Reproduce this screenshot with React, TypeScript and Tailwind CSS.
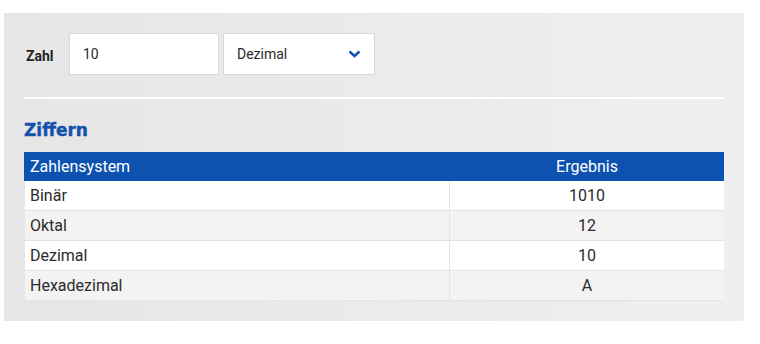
const rows = [
  { name: 'Binär', value: '1010' },
  { name: 'Oktal', value: '12' },
  { name: 'Dezimal', value: '10' },
  { name: 'Hexadezimal', value: 'A' },
];

export default function App() {
  return (
    <div className="min-h-screen bg-white pt-[13px] pl-[4px] font-['Roboto',sans-serif] text-[#2b2b2b]">
      <div className="w-[740px] h-[308px] bg-gradient-to-r from-[#e6e6e6] to-[#efefef] px-[20px] pt-[20px]">
        {/* Eingabe */}
        <div className="flex items-center h-[42px]">
          <label className="w-[45px] pl-[2px] pt-[4px] text-[14px] font-bold text-[#222]">Zahl</label>
          <input
            defaultValue="10"
            className="w-[150px] h-[42px] bg-white border border-[#d9d9d9] px-[13px] text-[14px] text-[#2b2b2b] outline-none"
          />
          <div className="ml-[4px] w-[152px] h-[42px] bg-white border border-[#d9d9d9] flex items-center justify-between pl-[13px] pr-[13px] text-[14px]">
            <span>Dezimal</span>
            <svg width="13" height="8" viewBox="0 0 13 8" fill="none">
              <path d="M1.5 1.5 L6.5 6 L11.5 1.5" stroke="#1452b0" strokeWidth="2.5" />
            </svg>
          </div>
        </div>

        <div className="mt-[22px] h-[2px] bg-white" />

        <h2 className="mt-[21px] text-[17px] leading-[20px] font-extrabold text-[#1450ae] font-['DejaVu_Sans',sans-serif] [-webkit-text-stroke:0.4px_#1450ae]">
          Ziffern
        </h2>

        {/* Tabelle */}
        <div className="mt-[12px] text-[16px]">
          <div className="flex h-[29px] items-center bg-[#0d52b0] text-white">
            <div className="w-[426px] pl-[6px]">Zahlensystem</div>
            <div className="flex-1 text-center">Ergebnis</div>
          </div>
          {rows.map((r, i) => (
            <div
              key={r.name}
              className={`ml-[1px] flex h-[30px] border-b border-[#e4e4e4] ${i % 2 === 0 ? 'bg-white' : 'bg-[#f3f3f3]'}`}
            >
              <div className="w-[425px] pl-[5px] flex items-center border-r border-[#e4e4e4]">{r.name}</div>
              <div className="flex-1 flex items-center justify-center">{r.value}</div>
            </div>
          ))}
        </div>
      </div>
    </div>
  );
}
